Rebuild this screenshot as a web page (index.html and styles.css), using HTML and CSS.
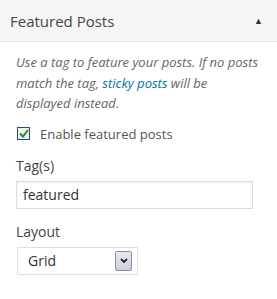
FILE: index.html
```html
<!DOCTYPE html>
<html lang="en">
<head>
    <meta charset="UTF-8">
    <title>Featured Posts</title>
    <link rel="stylesheet" href="styles.css">
</head>
<body>
    <div class="panel">
        <div class="panel-head">
            <h3>Featured Posts</h3>
            <span class="toggle">&#9650;</span>
        </div>
        <div class="panel-body">
            <p class="note">Use a tag to feature your posts. If no posts match the tag, <a href="#">sticky posts</a> will be displayed instead.</p>
            <label class="check">
                <span class="box">
                    <svg width="10" height="9" viewBox="0 0 10 9"><path d="M1 4.5 L4 7.5 L9 1" fill="none" stroke="#1e8e1e" stroke-width="2"/></svg>
                </span>
                Enable featured posts
            </label>
            <div class="field">
                <span class="label">Tag(s)</span>
                <div class="text-input">featured</div>
            </div>
            <div class="field">
                <span class="label">Layout</span>
                <div class="select">
                    <span>Grid</span>
                    <span class="arrow">
                        <svg width="8" height="6" viewBox="0 0 8 6"><path d="M1 1 L4 4 L7 1" fill="none" stroke="#222" stroke-width="1.8"/></svg>
                    </span>
                </div>
            </div>
        </div>
    </div>
</body>
</html>
```

FILE: styles.css
```css
body {
    margin: 0;
    font-family: "Open Sans", sans-serif;
    background: #fff;
    color: #444;
}

.panel {
    width: 277px;
}

.panel-head {
    display: flex;
    align-items: center;
    justify-content: space-between;
    height: 42px;
    padding: 0 14px 0 10px;
    background: #f5f5f5;
    border-bottom: 1px solid #e5e5e5;
    box-sizing: border-box;
}

.panel-head h3 {
    margin: 0;
    font-size: 15px;
    font-weight: normal;
    color: #464646;
}

.toggle {
    font-size: 9px;
    color: #333;
}

.panel-body {
    padding: 10px 16px 0 16px;
}

.note {
    margin: 0;
    font-size: 13px;
    line-height: 20.5px;
    font-style: italic;
    color: #666;
}

.note a {
    color: #0074a2;
    text-decoration: none;
}

.check {
    display: flex;
    align-items: center;
    gap: 10px;
    margin-top: 11px;
    font-size: 13px;
    color: #555;
}

.box {
    display: flex;
    align-items: center;
    justify-content: center;
    width: 11px;
    height: 11px;
    margin-left: 1px;
    border: 1px solid #2c4a6b;
    background: #f0f0f0;
}

.field {
    display: flex;
    flex-direction: column;
    margin-top: 13px;
}

.label {
    font-size: 14px;
    color: #444;
    margin-bottom: 6px;
}

.text-input {
    width: 237px;
    height: 28px;
    box-sizing: border-box;
    border: 1px solid #ddd;
    padding: 0 6px;
    font-size: 14px;
    line-height: 26px;
    color: #333;
    box-shadow: inset 0 1px 2px rgba(0, 0, 0, 0.07);
}

.select {
    display: flex;
    align-items: center;
    justify-content: space-between;
    width: 121px;
    height: 28px;
    margin-left: 1px;
    box-sizing: border-box;
    border: 1px solid #ddd;
    padding: 0 5px 0 10px;
    font-size: 14px;
    color: #333;
}

.arrow {
    display: flex;
    align-items: center;
    justify-content: center;
    width: 15px;
    height: 18px;
    border: 1px solid #8c8fa6;
    border-radius: 2px;
    background: linear-gradient(#e8e9f0, #cdd0dc);
}
```
